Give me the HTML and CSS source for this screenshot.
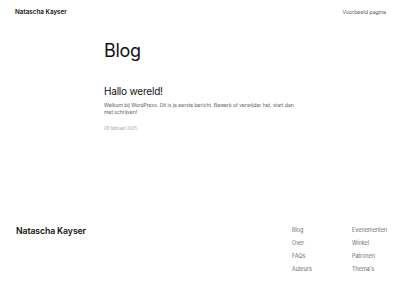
FILE: index.html
```html
<!DOCTYPE html>
<html lang="nl">
<head>
    <meta charset="UTF-8">
    <meta name="viewport" content="width=device-width, initial-scale=1.0">
    <title>Blog - Natascha Kayser</title>
    <link rel="stylesheet" href="styles.css">
</head>
<body>
    <header class="site-header">
        <a class="site-title" href="#">Natascha Kayser</a>
        <nav class="header-nav">
            <a href="#">Voorbeeld pagina</a>
        </nav>
    </header>

    <main class="content">
        <h1 class="page-title">Blog</h1>

        <article class="post">
            <h2 class="post-title">Hallo wereld!</h2>
            <p class="post-excerpt">Welkom bij WordPress. Dit is je eerste bericht. Bewerk of verwijder het, start dan met schrijven!</p>
            <time class="post-date">28 februari 2025</time>
        </article>
    </main>

    <footer class="site-footer">
        <a class="footer-title" href="#">Natascha Kayser</a>
        <nav class="footer-nav">
            <a href="#">Blog</a>
            <a href="#">Evenementen</a>
            <a href="#">Over</a>
            <a href="#">Winkel</a>
            <a href="#">FAQs</a>
            <a href="#">Patronen</a>
            <a href="#">Auteurs</a>
            <a href="#">Thema's</a>
        </nav>
    </footer>
</body>
</html>
```

FILE: styles.css
```css
body {
    margin: 0;
    font-family: Inter, "Noto Sans", sans-serif;
    background-color: #fff;
    color: #111;
}

a {
    color: inherit;
    text-decoration: none;
}

.site-header {
    display: flex;
    justify-content: space-between;
    align-items: center;
    height: 24px;
    padding: 0 14px 0 15px;
}

.site-title {
    font-size: 6.3px;
    font-weight: 600;
}

.header-nav {
    font-size: 5.3px;
    font-weight: 300;
}

.content {
    width: 192px;
    margin: 0 auto;
    padding-top: 16px;
}

.page-title {
    margin: 0;
    font-size: 18px;
    font-weight: 400;
    line-height: 1.2;
    letter-spacing: -0.3px;
}

.post {
    margin-top: 23px;
}

.post-title {
    margin: 0;
    font-size: 10px;
    font-weight: 400;
    line-height: 1.2;
    letter-spacing: -0.2px;
}

.post-excerpt {
    margin: 5px 0 0;
    font-size: 5.1px;
    font-weight: 300;
    line-height: 7.8px;
}

.post-date {
    display: block;
    margin-top: 9px;
    font-size: 4.2px;
    color: #999;
}

.site-footer {
    display: flex;
    justify-content: space-between;
    align-items: flex-start;
    margin-top: 95px;
    padding: 0 12px 0 16px;
}

.footer-title {
    font-size: 8.7px;
    font-weight: 600;
    letter-spacing: -0.1px;
}

.footer-nav {
    display: grid;
    grid-template-columns: 60px 36px;
    margin-top: -2px;
    font-size: 5.5px;
    font-weight: 300;
    line-height: 12.9px;
    color: #333;
}
```
